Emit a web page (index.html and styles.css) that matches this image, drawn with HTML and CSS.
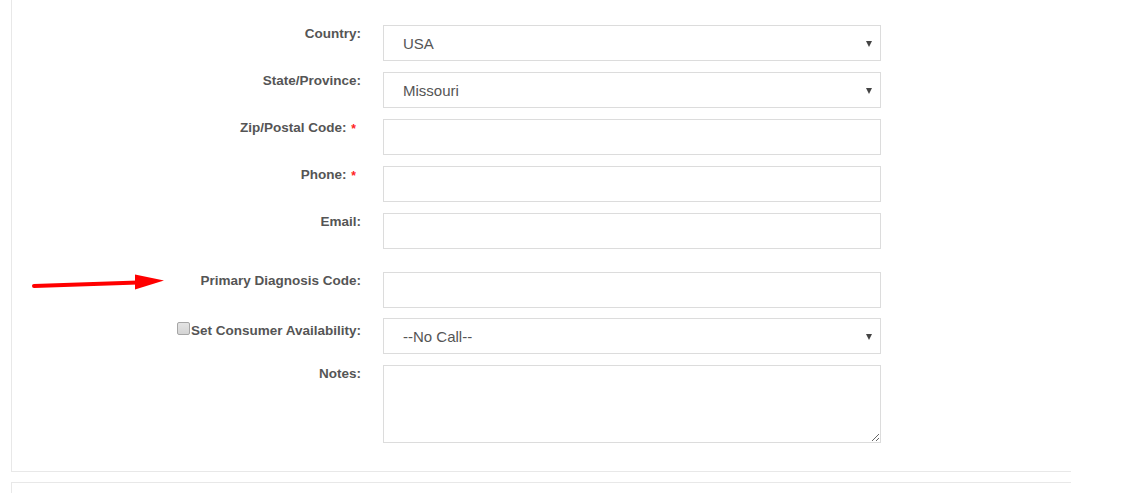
FILE: index.html
```html
<!DOCTYPE html>
<html>
<head>
<meta charset="utf-8">
<link rel="stylesheet" href="styles.css">
</head>
<body>
<div class="panel">
  <svg class="annot" width="140" height="20" viewBox="0 0 140 20">
    <path d="M2 14 L106 10.5" stroke="#f00" stroke-width="4" stroke-linecap="round" fill="none"/>
    <polygon points="103,2.5 132,8.5 103,17.5" fill="#f00"/>
  </svg>
  <form class="form">
    <div class="row">
      <label class="lbl">Country:</label>
      <div class="select">USA</div>
    </div>
    <div class="row">
      <label class="lbl">State/Province:</label>
      <div class="select">Missouri</div>
    </div>
    <div class="row">
      <label class="lbl">Zip/Postal Code: <span class="req">*</span></label>
      <input class="input" type="text">
    </div>
    <div class="row">
      <label class="lbl">Phone: <span class="req">*</span></label>
      <input class="input" type="text">
    </div>
    <div class="row">
      <label class="lbl">Email:</label>
      <input class="input" type="text">
    </div>
    <div class="row row-diag">
      <label class="lbl">Primary Diagnosis Code:</label>
      <input class="input" type="text">
    </div>
    <div class="row row-avail">
      <label class="lbl lbl-check"><span class="checkbox"></span>Set Consumer Availability:</label>
      <div class="select">--No Call--</div>
    </div>
    <div class="row">
      <label class="lbl">Notes:</label>
      <textarea class="textarea"></textarea>
    </div>
  </form>
</div>
<div class="panel2"></div>
</body>
</html>
```
FILE: styles.css
```css
html, body {
  margin: 0;
  padding: 0;
  background: #fff;
  font-family: "Liberation Sans", Arial, sans-serif;
  overflow: hidden;
}

.panel {
  position: relative;
  margin-left: 11px;
  width: 1059px;
  border-left: 1px solid #e8e8e8;
  border-bottom: 1px solid #e8e8e8;
  padding: 25px 0 28px 0;
}

.annot {
  position: absolute;
  left: 20px;
  top: 272px;
}

.form {
  display: flex;
  flex-direction: column;
  gap: 11px;
}

.row {
  display: grid;
  grid-template-columns: 349px 498px;
  column-gap: 22px;
  align-items: start;
}

.row-diag { margin-top: 12px; }
.row-avail { margin-top: -1px; }

.lbl {
  text-align: right;
  font-size: 13.5px;
  font-weight: bold;
  color: #555;
  line-height: 17px;
  padding-top: 0;
}

.req {
  color: #f22;
  font-size: 12px;
  margin-left: 1px;
  margin-right: 5px;
  vertical-align: -1px;
}

.lbl-check {
  display: flex;
  justify-content: flex-end;
  align-items: flex-end;
  padding-top: 4px;
}

.checkbox {
  display: inline-block;
  width: 11px;
  height: 11px;
  border: 1px solid #a6a6a6;
  border-radius: 2px;
  background: linear-gradient(#e4e4e4, #d4d4d4);
  margin-right: 1px;
  margin-bottom: 4px;
}

.select, .input, .textarea {
  box-sizing: border-box;
  width: 498px;
  height: 36px;
  border: 1px solid #dcdcdc;
  background: #fff;
  font-family: "Liberation Sans", Arial, sans-serif;
  font-size: 15px;
  color: #555;
  margin: 0;
  outline: none;
  border-radius: 0;
}

.select {
  position: relative;
  display: flex;
  align-items: center;
  padding-left: 19px;
}

.select::after {
  content: "";
  position: absolute;
  right: 8px;
  top: 15px;
  border-left: 3.5px solid transparent;
  border-right: 3.5px solid transparent;
  border-top: 6px solid #444;
}

.input {
  padding: 0 19px;
}

.textarea {
  display: block;
  height: 78px;
  resize: vertical;
  padding: 6px 19px;
}

.panel2 {
  margin-top: 10px;
  margin-left: 11px;
  width: 1059px;
  height: 30px;
  border-left: 1px solid #e8e8e8;
  border-top: 1px solid #e8e8e8;
}
```
